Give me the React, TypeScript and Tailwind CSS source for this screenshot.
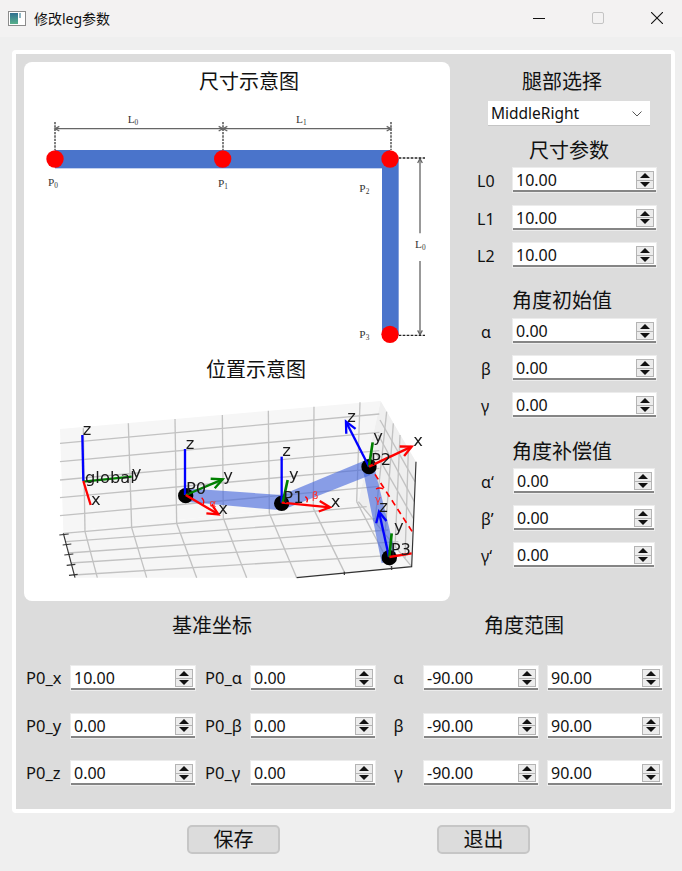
const FONT = "font-['Noto_Sans','Noto_Sans_CJK_SC',sans-serif]";

// 数值输入框 + 上下按钮
function Spin({ value, className }: { value: string; className: string }) {
  return (
    <div className={`flex h-6 items-center justify-between border-b-2 border-[#858585] bg-white pt-[2px] pr-[2px] pl-[3px] text-[16px] leading-none text-[#111] shadow-[0_0_0_1px_#ececec] ${className}`}>
      <span>{value}</span>
      <div className="flex h-[18px] w-[18px] flex-col border border-[#b4b4b4] bg-[#ececec]">
        <div className="flex flex-1 items-center justify-center border-b border-[#b4b4b4]">
          <svg width="10" height="5" viewBox="0 0 10 5"><path d="M5 0 L10 5 L0 5 Z" fill="#111" /></svg>
        </div>
        <div className="flex flex-1 items-center justify-center">
          <svg width="10" height="5" viewBox="0 0 10 5"><path d="M0 0 L10 0 L5 5 Z" fill="#111" /></svg>
        </div>
      </div>
    </div>
  );
}

function Heading({ text, className }: { text: string; className: string }) {
  return <div className={`h-6 text-[20px] leading-6 whitespace-nowrap text-[#111] ${className}`}>{text}</div>;
}

function Arrow({ x1, y1, x2, y2, color, w = 7, head = 36 }: { x1: number; y1: number; x2: number; y2: number; color: string; w?: number; head?: number }) {
  const a = Math.atan2(y2 - y1, x2 - x1);
  const p = (d: number) => `${x2 - head * Math.cos(a + d)},${y2 - head * Math.sin(a + d)}`;
  return (
    <g stroke={color} strokeWidth={w} fill="none">
      <line x1={x1} y1={y1} x2={x2} y2={y2} />
      <polyline points={`${p(0.45)} ${x2},${y2} ${p(-0.45)}`} />
    </g>
  );
}

function SizeDiagram() {
  const serif = "'Liberation Serif', serif";
  const label = (x: number, y: number, a: string, b: string) => (
    <text x={x} y={y} fontFamily={serif} fontSize="34" fill="#333">
      {a}
      <tspan fontSize="22" dy="6">{b}</tspan>
    </text>
  );
  return (
    <svg viewBox="12 120 1278 774" className="block h-[258px] w-[426px]">
      <g stroke="#666" strokeWidth="5" strokeDasharray="7 3">
        <line x1="105" y1="186" x2="105" y2="270" />
        <line x1="609" y1="186" x2="609" y2="270" />
        <line x1="1113" y1="186" x2="1113" y2="270" />
      </g>
      <g stroke="#666" strokeWidth="4" fill="none">
        <line x1="105" y1="206" x2="1113" y2="206" />
        <polyline points="118,199 105,206 118,213" />
        <polyline points="596,199 609,206 596,213" />
        <polyline points="622,199 609,206 622,213" />
        <polyline points="1100,199 1113,206 1100,213" />
        <line x1="1200" y1="296" x2="1200" y2="520" />
        <line x1="1200" y1="603" x2="1200" y2="824" />
        <polyline points="1193,309 1200,296 1207,309" />
        <polyline points="1193,811 1200,824 1207,811" />
      </g>
      <g stroke="#222" strokeWidth="4" strokeDasharray="8 4">
        <line x1="1136" y1="294" x2="1215" y2="294" />
        <line x1="1136" y1="826" x2="1215" y2="826" />
      </g>
      <rect x="105" y="270" width="1005" height="55" fill="#4a74cb" />
      <rect x="1086" y="297" width="50" height="528" fill="#4a74cb" />
      <circle cx="105" cy="297" r="26" fill="#ff0000" />
      <circle cx="608" cy="297" r="26" fill="#ff0000" />
      <circle cx="1110" cy="297" r="26" fill="#ff0000" />
      <circle cx="1110" cy="823" r="26" fill="#ff0000" />
      {label(323, 188, "L", "0")}
      {label(828, 188, "L", "1")}
      {label(1185, 563, "L", "0")}
      {label(84, 378, "P", "0")}
      {label(594, 380, "P", "1")}
      {label(1018, 396, "P", "2")}
      {label(1018, 833, "P", "3")}
    </svg>
  );
}

function PositionDiagram() {
  const sans = "'DejaVu Sans', sans-serif";
  const t = (x: number, y: number, s: string) => (
    <text x={x} y={y} fontFamily={sans} fontSize="49" fill="#1a1a1a">{s}</text>
  );
  const wallH = [265, 320, 375, 428, 482];
  const wallV = [[190, 220, 195, 530], [325, 205, 335, 518], [465, 192, 470, 505], [607, 180, 610, 490], [745, 167, 748, 475], [882, 155, 880, 460], [1020, 142, 1010, 440]];
  const floorV = [[195, 530, 232, 668], [335, 518, 380, 668], [470, 505, 530, 668], [610, 490, 680, 668], [748, 475, 830, 668], [880, 460, 975, 655], [1010, 440, 1115, 640]];
  const floorH = [[130, 535, 1040, 455], [138, 560, 1075, 490], [145, 594, 1105, 525], [152, 624, 1135, 560], [160, 660, 1165, 598]];
  const sideV = [[1100, 170, 1065, 500], [1120, 205, 1095, 540], [1140, 240, 1125, 580], [1165, 285, 1155, 610]];
  const sideH = [[1080, 195, 1185, 380], [1075, 240, 1183, 440], [1065, 290, 1180, 490], [1015, 440, 1175, 635]];
  return (
    <svg viewBox="12 90 1278 630" className="block h-[210px] w-[426px] blur-[0.4px]">
      <polygon points="120,222 1082,138 1015,440 130,530" fill="#f6f6f6" />
      <polygon points="1082,138 1188,320 1175,635 1015,440" fill="#efefef" />
      <polygon points="130,530 1015,440 1175,635 830,668 165,668" fill="#f6f6f6" />
      <g stroke="#c2c2c2" strokeWidth="4">
        {wallH.map((y) => <line key={y} x1="120" y1={y} x2="1078" y2={y - 88} />)}
        {[...wallV, ...floorV, ...floorH, ...sideV, ...sideH].map((l, i) => (
          <line key={i} x1={l[0]} y1={l[1]} x2={l[2]} y2={l[3]} />
        ))}
      </g>
      <g stroke="#333" strokeWidth="3.5" fill="none">
        <polyline points="830,668 1175,635 1188,320" />
        <line x1="130" y1="535" x2="165" y2="668" />
        <line x1="118" y1="540" x2="146" y2="537" />
        <line x1="128" y1="570" x2="154" y2="567" />
        <line x1="133" y1="600" x2="160" y2="597" />
        <line x1="140" y1="631" x2="166" y2="628" />
        <line x1="147" y1="661" x2="173" y2="658" />
        <line x1="973" y1="650" x2="973" y2="660" />
        <line x1="1115" y1="633" x2="1115" y2="645" />
      </g>
      <g fill="#3f63dc" fillOpacity="0.6">
        <polygon points="497,400 785,420 785,466 497,440" />
        <polygon points="785,420 1038,315 1052,360 785,466" />
        <polygon points="1030,350 1065,345 1130,610 1085,625" />
      </g>
      <line x1="1065" y1="358" x2="1180" y2="535" stroke="#ff0000" strokeWidth="5" strokeDasharray="18 13" />
      <circle cx="497" cy="422" r="23" fill="#000" />
      <circle cx="785" cy="445" r="23" fill="#000" />
      <circle cx="1047" cy="335" r="23" fill="#000" />
      <circle cx="1108" cy="608" r="23" fill="#000" />
      <line x1="190" y1="378" x2="187" y2="240" stroke="#0000ff" strokeWidth="7" />
      <line x1="190" y1="380" x2="335" y2="365" stroke="#008000" strokeWidth="7" />
      <line x1="190" y1="378" x2="212" y2="450" stroke="#ff0000" strokeWidth="7" />
      <line x1="495" y1="420" x2="495" y2="282" stroke="#0000ff" strokeWidth="7" />
      <Arrow x1={497} y1={420} x2={608} y2={373} color="#008000" />
      <Arrow x1={497} y1={420} x2={595} y2={478} color="#ff0000" />
      <line x1="785" y1="443" x2="785" y2="305" stroke="#0000ff" strokeWidth="7" />
      <line x1="788" y1="443" x2="803" y2="375" stroke="#008000" strokeWidth="8" />
      <Arrow x1={785} y1={443} x2={930} y2={457} color="#ff0000" />
      <Arrow x1={1047} y1={335} x2={978} y2={200} color="#0000ff" />
      <line x1="1047" y1="335" x2="1058" y2="262" stroke="#008000" strokeWidth="8" />
      <Arrow x1={1047} y1={335} x2={1175} y2={275} color="#ff0000" />
      <Arrow x1={1107} y1={606} x2={1077} y2={470} color="#0000ff" />
      <line x1="1108" y1="606" x2="1115" y2="535" stroke="#008000" strokeWidth="8" />
      <line x1="1108" y1="606" x2="1175" y2="595" stroke="#ff0000" strokeWidth="7" />
      <g fill="none" stroke="#ff0000" strokeWidth="4">
        <path d="M545 428 Q556 438 548 450" />
        <path d="M856 425 Q866 432 860 442" />
        <path d="M1068 402 Q1078 396 1090 402" />
      </g>
      {t(188, 240, "z")}
      {t(195, 384, "global")}
      {t(335, 368, "y")}
      {t(213, 450, "x")}
      {t(497, 282, "z")}
      {t(498, 418, "P0")}
      {t(610, 378, "y")}
      {t(595, 478, "x")}
      {t(787, 302, "z")}
      {t(807, 375, "y")}
      {t(790, 443, "P1")}
      {t(932, 455, "x")}
      {t(982, 200, "z")}
      {t(1060, 262, "y")}
      {t(1053, 330, "P2")}
      {t(1180, 272, "x")}
      {t(1078, 470, "z")}
      {t(1122, 532, "y")}
      {t(1112, 600, "P3")}
      <g fontFamily={sans} fontSize="32" fill="#ff3030">
        <text x="568" y="455">α</text>
        <text x="875" y="433">β</text>
        <text x="1064" y="445">γ</text>
      </g>
    </svg>
  );
}

function SideRow({ label, labelClass, spinClass, value }: { label: string; labelClass: string; spinClass: string; value: string }) {
  return (
    <div className="flex h-6 items-center">
      <div className={`pt-[2px] text-[16px] leading-none text-[#111] ${labelClass}`}>{label}</div>
      <Spin value={value} className={spinClass} />
    </div>
  );
}

function SidePanel() {
  return (
    <div className="flex w-[220px] flex-col pt-[8px]">
      <Heading text="腿部选择" className="ml-[72px]" />
      <div className="mt-[7px] ml-[38px] flex h-[25px] w-[162px] items-center justify-between border-b border-[#c4c4c4] bg-white pt-[2px] pr-[8px] pl-[3px] text-[15.5px] leading-none text-[#111]">
        <span>MiddleRight</span>
        <svg width="10" height="6" viewBox="0 0 10 6" fill="none" stroke="#555" strokeWidth="1"><path d="M0.5 0.5 L5 5 L9.5 0.5" /></svg>
      </div>
      <Heading text="尺寸参数" className="mt-[13px] ml-[79px]" />
      <div className="mt-[5px] flex flex-col gap-[13.5px]">
        {["L0", "L1", "L2"].map((l) => (
          <SideRow key={l} label={l} labelClass="ml-[27px] w-[36px]" spinClass="w-[143px]" value="10.00" />
        ))}
      </div>
      <Heading text="角度初始值" className="mt-[22px] ml-[62px]" />
      <div className="mt-[6px] flex flex-col gap-[13px]">
        {["α", "β", "γ"].map((l) => (
          <SideRow key={l} label={l} labelClass="ml-[31px] w-[32px]" spinClass="w-[143px]" value="0.00" />
        ))}
      </div>
      <Heading text="角度补偿值" className="mt-[23px] ml-[62px]" />
      <div className="mt-[5px] flex flex-col gap-[13px]">
        {["α‘", "β’", "γ‘"].map((l) => (
          <SideRow key={l} label={l} labelClass="ml-[31px] w-[33px]" spinClass="w-[140px]" value="0.00" />
        ))}
      </div>
    </div>
  );
}

const baseRows = [
  { a: "P0_x", av: "10.00", b: "P0_α", g: "α" },
  { a: "P0_y", av: "0.00", b: "P0_β", g: "β" },
  { a: "P0_z", av: "0.00", b: "P0_γ", g: "γ" },
];

function BottomGrid() {
  return (
    <div>
      <div className="mt-[13px] flex">
        <Heading text="基准坐标" className="ml-[156px] w-[80px]" />
        <Heading text="角度范围" className="ml-[232px] w-[80px]" />
      </div>
      <div className="mt-[28px] flex flex-col gap-[23.5px]">
        {baseRows.map((r) => (
          <div key={r.a} className="flex h-6 items-center text-[16.5px] leading-none text-[#111]">
            <div className="w-[55px] pt-[1px] pl-[10px]">{r.a}</div>
            <Spin value={r.av} className="w-[124px]" />
            <div className="ml-[10px] w-[46px] pt-[1px]">{r.b}</div>
            <Spin value="0.00" className="w-[124px]" />
            <div className="w-[49px] pt-[1px] pr-[2px] text-center">{r.g}</div>
            <Spin value="-90.00" className="w-[114px]" />
            <Spin value="90.00" className="ml-[10px] w-[114px]" />
          </div>
        ))}
      </div>
    </div>
  );
}

function TitleBar() {
  return (
    <div className="flex h-[37px] items-center bg-[#f3f2f2] pb-[1px] text-[14px] text-[#111]">
      <div className="ml-[8px] flex h-[15px] w-[18px] items-stretch gap-[1px] border border-[#8c8c8c] bg-white p-[1px]">
        <div className="w-[8px] bg-gradient-to-b from-[#2f6f8f] to-[#58b08a]" />
        <div className="h-[5px] w-[2px] bg-[#8fb7c4]" />
      </div>
      <span className="ml-[8px]">修改leg参数</span>
      <div className="ml-auto flex items-center">
        <div className="h-px w-[12px] bg-[#111]" />
        <div className="ml-[47px] h-[12px] w-[12px] rounded-[2px] border border-[#c4c4c4]" />
        <svg className="mr-[19px] ml-[47px]" width="12" height="12" viewBox="0 0 12 12" stroke="#111" strokeWidth="1.1"><path d="M0 0 L12 12 M12 0 L0 12" /></svg>
      </div>
    </div>
  );
}

export default function App() {
  return (
    <div className={`flex h-[871px] w-[682px] flex-col overflow-hidden bg-[#efefef] ${FONT}`}>
      <TitleBar />
      <div className="mt-[13px] ml-[12px] h-[763px] w-[663px] rounded-[4px] border-[4px] border-white bg-[#dcdcdc]">
        <div className="flex pt-[8px] pl-[8px]">
          <div className="flex h-[539px] w-[426px] flex-col rounded-[8px] bg-white">
            <Heading text="尺寸示意图" className="mt-[8px] ml-[175px] h-[30px]" />
            <SizeDiagram />
            <Heading text="位置示意图" className="ml-[182px] h-[27px]" />
            <PositionDiagram />
          </div>
          <SidePanel />
        </div>
        <BottomGrid />
      </div>
      <div className="mt-[12px] flex">
        <button className="ml-[187px] h-[29px] w-[93px] rounded-[5px] border-2 border-[#c6c6c6] bg-[#dcdcdc] text-[20px] leading-none text-[#111]">保存</button>
        <button className="ml-[157px] h-[29px] w-[93px] rounded-[5px] border-2 border-[#c6c6c6] bg-[#dcdcdc] text-[20px] leading-none text-[#111]">退出</button>
      </div>
    </div>
  );
}
